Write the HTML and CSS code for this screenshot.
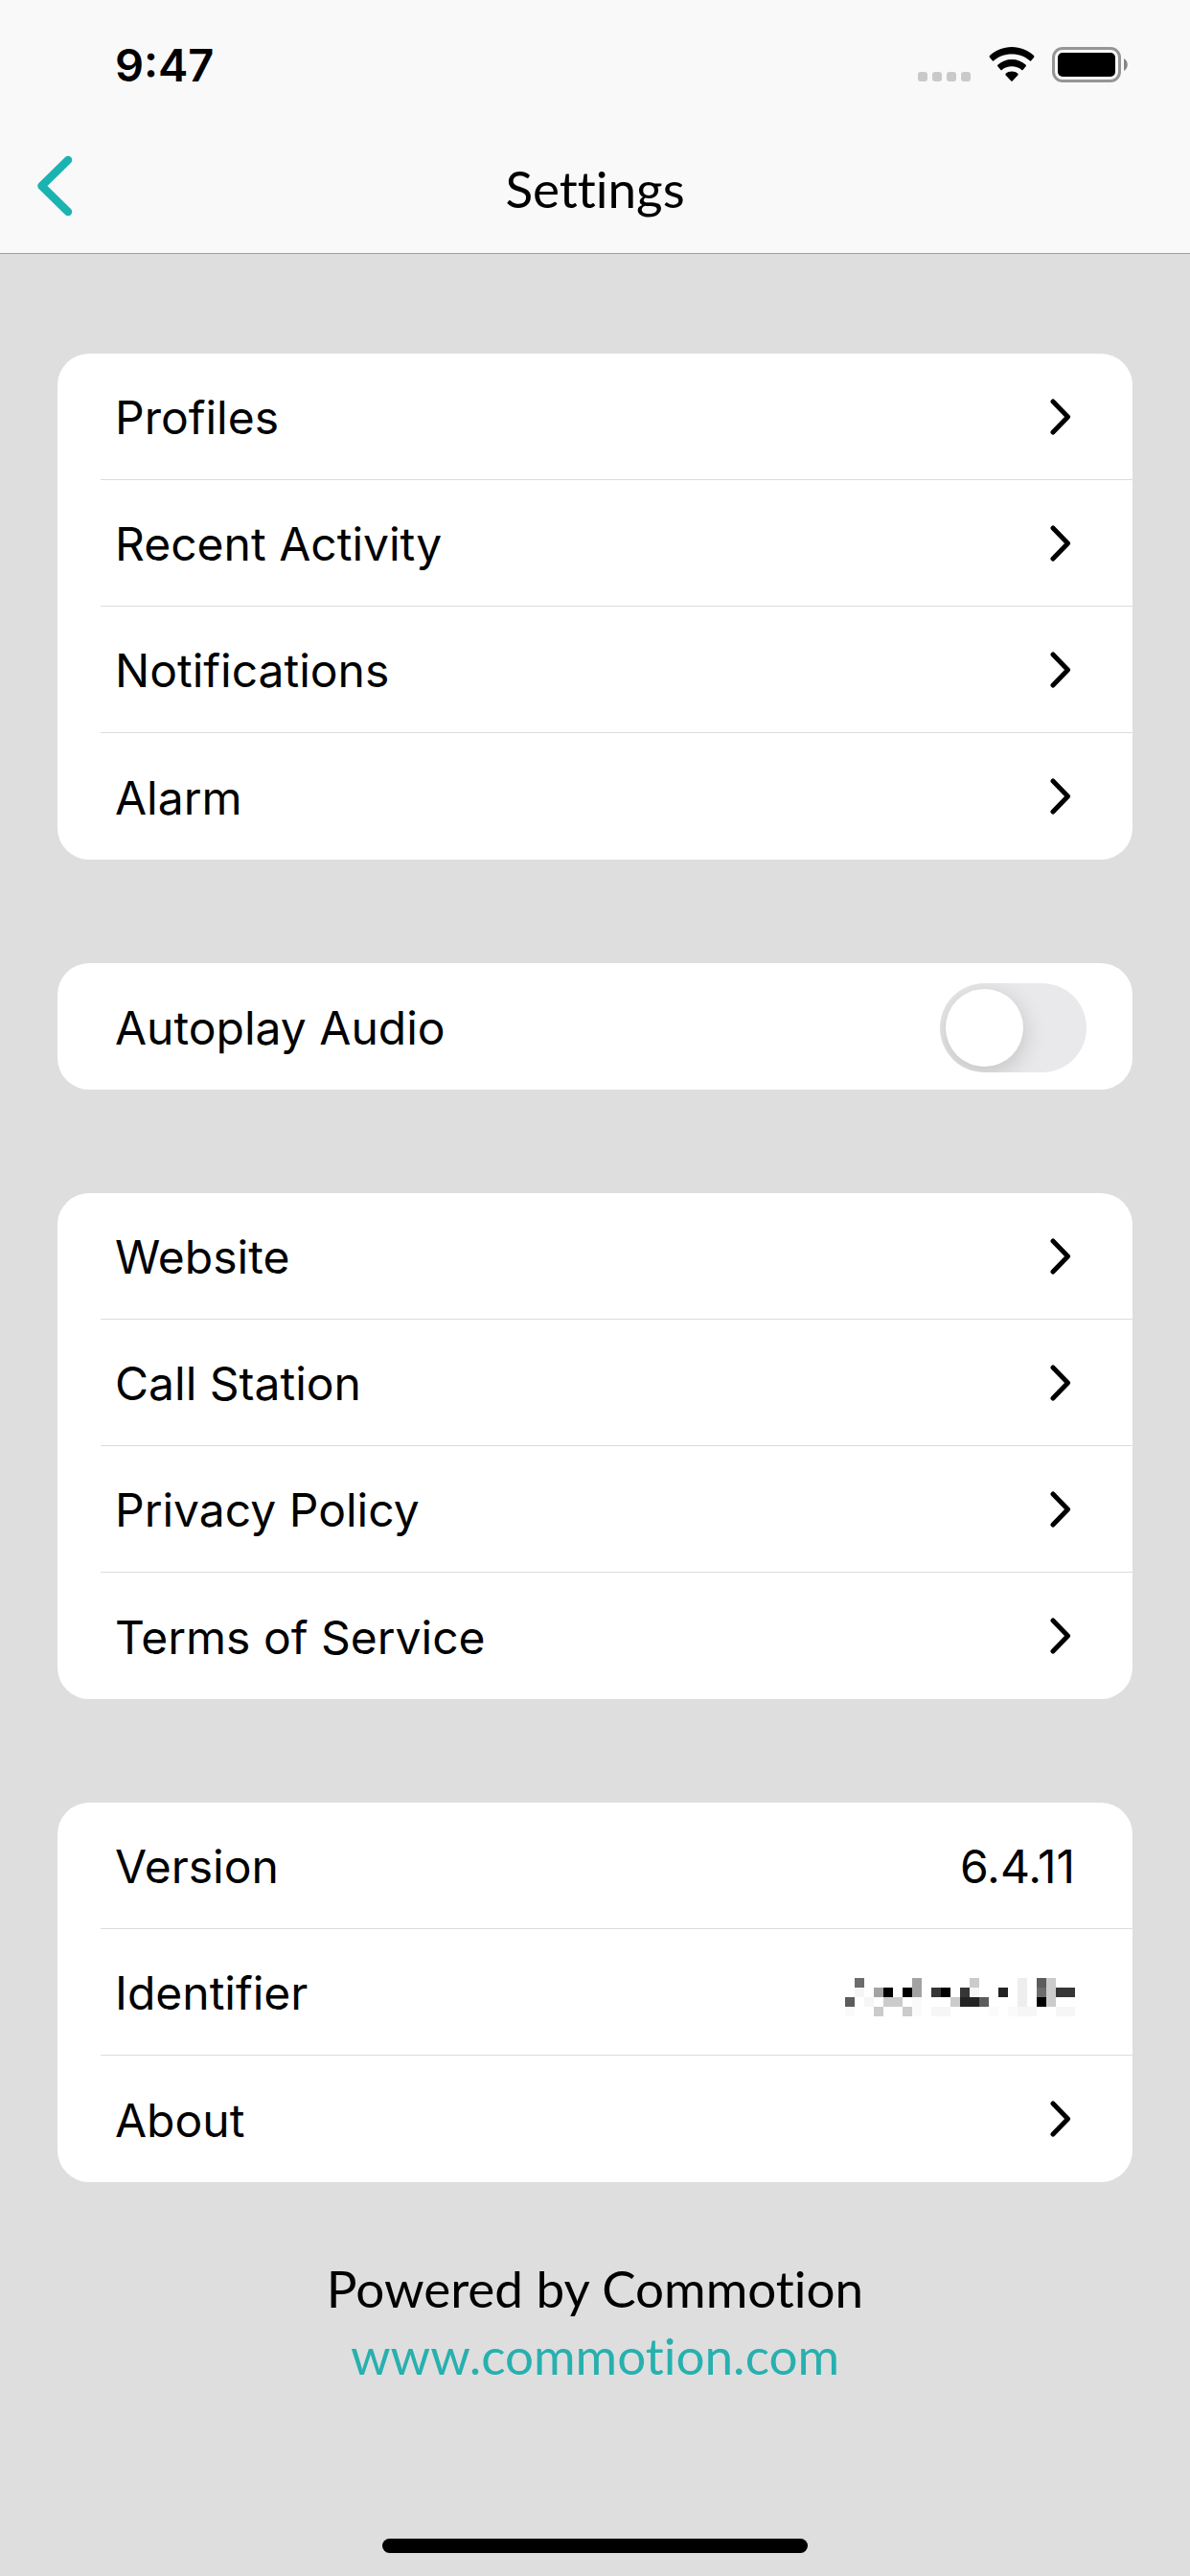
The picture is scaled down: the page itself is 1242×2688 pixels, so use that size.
FILE: index.html
```html
<!DOCTYPE html>
<html lang="en">
<head>
  <meta charset="UTF-8">
  <meta name="viewport" content="width=device-width, initial-scale=1.0">
  <title>Settings</title>
  <link rel="stylesheet" href="styles.css">
</head>
<body>

  <!-- chevron shared by all link rows -->
  <svg class="sprite" aria-hidden="true">
    <symbol id="chevron" viewBox="0 0 22 38">
      <path d="M3 3 L18.500 19 L3 35" fill="none" stroke="currentColor" stroke-width="5" stroke-linecap="round" stroke-linejoin="round"/>
    </symbol>
  </svg>

  <header class="header">
    <div class="status-bar">
      <span class="time">9:47</span>
      <div class="status-icons">
        <svg class="signal" viewBox="0 0 55 37" fill="#c9c9c9">
          <rect x="0" y="26" width="10" height="10" rx="3"/>
          <rect x="15" y="26" width="10" height="10" rx="3"/>
          <rect x="30" y="26" width="10" height="10" rx="3"/>
          <rect x="45" y="26" width="10" height="10" rx="3"/>
        </svg>
        <svg class="wifi" viewBox="0 0 48 37">
          <path d="M24 0 C33 0 41 3.500 47 9 Q48 10 47 11 L44 14.500 Q43.500 15 43 14.500 C38 10 31.500 7.500 24 7.500 C16.500 7.500 10 10 5 14.500 Q4.500 15 4 14.500 L1 11 Q0 10 1 9 C7 3.500 15 0 24 0 Z"/>
          <path d="M24 13 C29.500 13 34.500 15 38.500 18.500 Q39.500 19.500 38.500 20.500 L35.500 24 Q35 24.500 34.300 24 C31.500 21.500 28 20.300 24 20.300 C20 20.300 16.500 21.500 13.700 24 Q13 24.500 12.500 24 L9.500 20.500 Q8.500 19.500 9.500 18.500 C13.500 15 18.500 13 24 13 Z"/>
          <path d="M24 25.500 C26.500 25.500 28.700 26.400 30.300 27.800 Q31 28.600 30.300 29.400 L24.700 35.500 Q24 36.200 23.300 35.500 L17.700 29.400 Q17 28.600 17.700 27.800 C19.300 26.400 21.500 25.500 24 25.500 Z"/>
        </svg>
        <svg class="battery" viewBox="0 0 80 37">
          <rect x="1.500" y="1.500" width="69" height="34" rx="9.500" fill="none" stroke="#959595" stroke-width="3"/>
          <rect x="6" y="6" width="60" height="25" rx="5"/>
          <path d="M75 12 C80 14.500 80 22.500 75 25 Z" fill="#868686"/>
        </svg>
      </div>
    </div>
    <nav class="nav-bar">
      <button class="back" type="button" aria-label="Back">
        <svg viewBox="0 0 38 64">
          <path d="M33 5 L5.500 32 L33 59" fill="none" stroke="currentColor" stroke-width="8.500" stroke-linecap="round" stroke-linejoin="round"/>
        </svg>
      </button>
      <h1 class="title">Settings</h1>
    </nav>
  </header>

  <main class="content">
    <section class="card">
      <a class="row" href="#"><span>Profiles</span><svg class="chevron"><use href="#chevron"/></svg></a>
      <a class="row" href="#"><span>Recent Activity</span><svg class="chevron"><use href="#chevron"/></svg></a>
      <a class="row" href="#"><span>Notifications</span><svg class="chevron"><use href="#chevron"/></svg></a>
      <a class="row" href="#"><span>Alarm</span><svg class="chevron"><use href="#chevron"/></svg></a>
    </section>

    <section class="card">
      <div class="row row-switch">
        <label for="autoplay">Autoplay Audio</label>
        <input class="switch" type="checkbox" id="autoplay">
      </div>
    </section>

    <section class="card">
      <a class="row" href="#"><span>Website</span><svg class="chevron"><use href="#chevron"/></svg></a>
      <a class="row" href="#"><span>Call Station</span><svg class="chevron"><use href="#chevron"/></svg></a>
      <a class="row" href="#"><span>Privacy Policy</span><svg class="chevron"><use href="#chevron"/></svg></a>
      <a class="row" href="#"><span>Terms of Service</span><svg class="chevron"><use href="#chevron"/></svg></a>
    </section>

    <section class="card">
      <div class="row"><span>Version</span><span>6.4.11</span></div>
      <div class="row">
        <span>Identifier</span>
        <!-- redacted value, 10px blocks -->
        <svg class="redacted" viewBox="0 0 24 5" shape-rendering="crispEdges">
          <path fill="#000" d="M4 2h1v1h-1z M6 2h1v1h-1z M10 2h1v1h-1z M20 3h1v1h-1z"/>
          <path fill="#232323" d="M16 2h1v1h-1z M12 3h2v1h-2z"/>
          <path fill="#363636" d="M9 2h1v1h-1z M12 2h1v1h-1z M22 2h2v1h-2z"/>
          <path fill="#5c5c5c" d="M0 3h1v1h-1z M14 3h1v1h-1z M20 1h1v1h-1z"/>
          <path fill="#6c6c6c" d="M1 1h1v1h-1z M20 2h1v1h-1z"/>
          <path fill="#a3a3a3" d="M3 2h1v1h-1z M7 1h1v2h-1z"/>
          <path fill="#cbcbcb" d="M13 1h1v1h-1z M4 3h2v1h-2z M3 4h1v1h-1z M6 4h1v1h-1z M11 3h1v1h-1z M21 1h1v3h-1z"/>
          <path fill="#eeeeee" d="M18 1h1v3h-1z"/>
          <path fill="#f6f6f6" d="M1 2h1v1h-1z M2 3h1v1h-1z M13 2h1v1h-1z M9 4h2v1h-2z M18 4h2v1h-2z M22 4h2v1h-2z"/>
          <path fill="#fafafa" d="M0 4h1v1h-1z M7 3h1v2h-1z M15 4h1v1h-1z M17 4h1v1h-1z"/>
        </svg>
      </div>
      <a class="row" href="#"><span>About</span><svg class="chevron"><use href="#chevron"/></svg></a>
    </section>
  </main>

  <footer class="footer">
    <p>Powered by Commotion</p>
    <a href="#">www.commotion.com</a>
  </footer>

  <div class="home-indicator"></div>

</body>
</html>
```
FILE: styles.css
```css
* {
  box-sizing: border-box;
}

body {
  margin: 0;
  min-height: 100vh;
  display: flex;
  flex-direction: column;
  font-family: Inter, "Liberation Sans", sans-serif;
  font-size: 48px;
  color: #000;
  background: #dedede;
}

.sprite {
  display: none;
}

.header {
  background: #f9f9f9;
  border-bottom: 1px solid #a0a0a0;
  padding-bottom: 12px;
}

.status-bar {
  display: flex;
  justify-content: space-between;
  align-items: center;
  height: 135px;
  padding: 0 64px 0 120px;
}

.time {
  font-size: 47px;
  font-weight: 600;
}

.status-icons {
  display: flex;
  align-items: center;
}

.status-icons svg {
  height: 37px;
}

.signal {
  width: 55px;
  margin-right: 19px;
}

.wifi {
  width: 48px;
  margin-right: 18px;
}

.battery {
  width: 80px;
}

.nav-bar {
  display: grid;
  grid-template-columns: 120px 1fr 120px;
  align-items: center;
  height: 117px;
}

.back {
  display: flex;
  padding: 0 0 0 38px;
  border: none;
  background: none;
  color: #1bb3b2;
  cursor: pointer;
}

.back svg {
  width: 38px;
  height: 64px;
}

.title {
  margin: 0;
  padding-top: 6px;
  font-family: Lato, sans-serif;
  font-size: 53px;
  font-weight: 400;
  font-variant-ligatures: none;
  text-align: center;
}

.content {
  display: flex;
  flex-direction: column;
  gap: 108px;
  padding: 104px 60px 0;
}

.card {
  background: #fff;
  border-radius: 33px;
  padding-left: 45px;
}

.row {
  display: flex;
  justify-content: space-between;
  align-items: center;
  height: 132px;
  padding: 0 60px 0 15px;
  border-bottom: 1px solid #dcdcdc;
  color: inherit;
  text-decoration: none;
}

.row:last-child {
  border-bottom: none;
}

.row span {
  padding-top: 2px;
}

.row-switch {
  padding-top: 2px;
  padding-right: 48px;
}

.chevron {
  width: 22px;
  height: 38px;
  margin-right: 4px;
}

.redacted {
  width: 240px;
  height: 50px;
}

.switch {
  appearance: none;
  width: 153px;
  height: 93px;
  margin: 0;
  padding: 6px;
  border-radius: 47px;
  background: #e9e9eb;
  overflow: hidden;
  cursor: pointer;
}

.switch::before {
  content: "";
  display: block;
  width: 81px;
  height: 81px;
  border-radius: 50%;
  background: #fff;
  box-shadow: 0 6px 24px rgba(0, 0, 0, 0.18);
}

.switch:checked {
  background: #1bb3b2;
}

.switch:checked::before {
  margin-left: 60px;
}

.footer {
  padding: 76px 60px 0;
  font-family: Lato, sans-serif;
  font-size: 53px;
  font-variant-ligatures: none;
  line-height: 70px;
  text-align: center;
}

.footer p {
  margin: 0;
}

.footer a {
  color: #27b0ae;
  text-decoration: none;
}

.home-indicator {
  width: 444px;
  height: 15px;
  margin: auto auto 24px;
  border-radius: 8px;
  background: #000;
}
```
